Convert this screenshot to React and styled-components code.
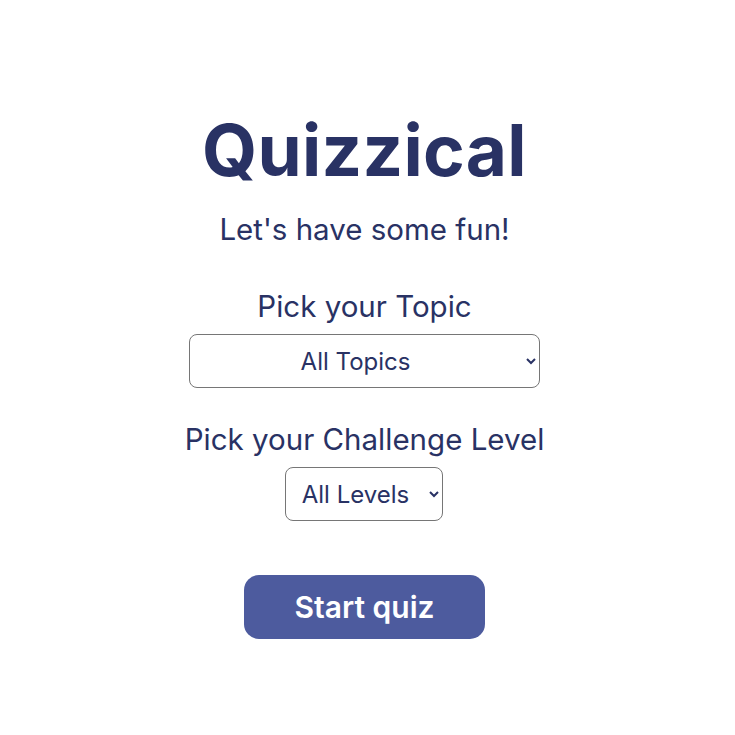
import React from 'react';
import styled, { createGlobalStyle } from 'styled-components';

const GlobalStyle = createGlobalStyle`
  body {
    margin: 0;
    background: #ffffff;
    font-family: Inter, "Noto Sans", sans-serif;
    color: #293264;
  }
`;

const Page = styled.main`
  min-height: 100vh;
  display: flex;
  flex-direction: column;
  align-items: center;
  text-align: center;
  padding: 106px 6px 40px 0;
  box-sizing: border-box;
`;

const Title = styled.h1`
  margin: 0;
  font-size: 71px;
  line-height: 88px;
  font-weight: 700;
  letter-spacing: 0.3px;
`;

const Tagline = styled.p`
  margin: 17px 0 41px;
  font-size: 29.5px;
  line-height: 36px;
  font-weight: 400;
`;

const Field = styled.label`
  display: flex;
  flex-direction: column;
  align-items: center;
  gap: 10px;
  margin-bottom: 33px;
`;

const FieldLabel = styled.span`
  font-size: 29.5px;
  line-height: 36px;
`;

const Select = styled.select`
  width: ${(p) => p.$width}px;
  height: 54px;
  font-family: inherit;
  font-size: 24px;
  color: #293264;
  text-align: center;
  background: #fff;
  border: 1px solid #767676;
  border-radius: 8px;
  padding: 0 16px 0 10px;
`;

const StartButton = styled.button`
  margin-top: 21px;
  width: 241px;
  height: 64px;
  border: none;
  border-radius: 15px;
  background: #4d5b9e;
  color: #fff;
  font-family: inherit;
  font-size: 30px;
  font-weight: 600;
  cursor: pointer;
`;

export default function App() {
  return (
    <>
      <GlobalStyle />
      <Page>
        <Title>Quizzical</Title>
        <Tagline>Let's have some fun!</Tagline>
        <Field>
          <FieldLabel>Pick your Topic</FieldLabel>
          <Select $width={351} defaultValue="any">
            <option value="any">All Topics</option>
            <option value="9">General Knowledge</option>
            <option value="17">Science &amp; Nature</option>
          </Select>
        </Field>
        <Field>
          <FieldLabel>Pick your Challenge Level</FieldLabel>
          <Select $width={158} defaultValue="any">
            <option value="any">All Levels</option>
            <option value="easy">Easy</option>
            <option value="medium">Medium</option>
            <option value="hard">Hard</option>
          </Select>
        </Field>
        <StartButton>Start quiz</StartButton>
      </Page>
    </>
  );
}
